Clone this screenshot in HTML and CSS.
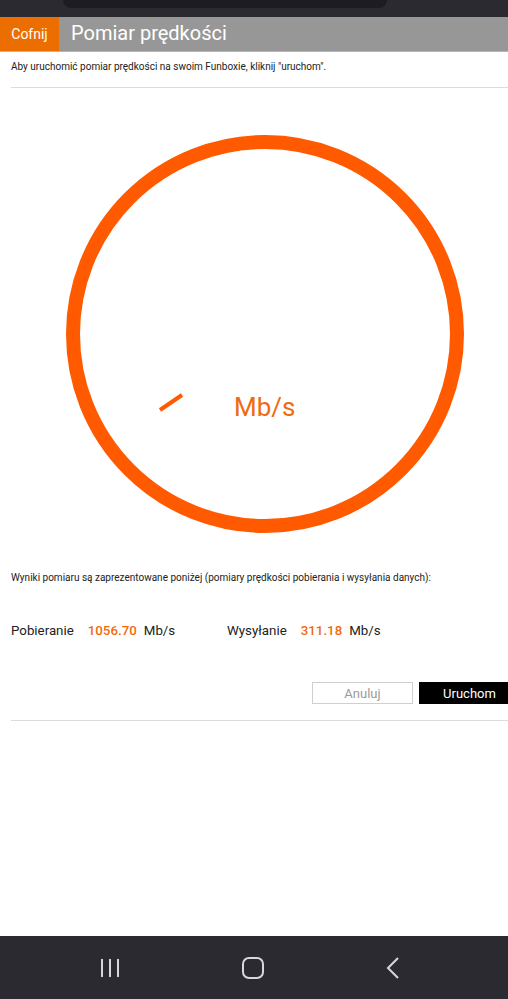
FILE: index.html
```html
<!DOCTYPE html>
<html lang="pl">

<head>
  <meta charset="UTF-8">
  <meta name="viewport" content="width=device-width, initial-scale=1.0">
  <title>Pomiar prędkości</title>
  <link rel="stylesheet" href="styles.css">
</head>

<body>
  <div class="statusbar">
    <div class="notch"></div>
  </div>

  <div class="header">
    <span class="back">Cofnij</span>
    <h1 class="title">Pomiar prędkości</h1>
  </div>

  <div class="main">
    <p class="info">Aby uruchomić pomiar prędkości na swoim Funboxie, kliknij "uruchom".</p>
    <hr class="sep">

    <!-- licznik -->
    <svg class="gauge" width="508" height="400" viewBox="0 0 508 400">
      <circle cx="265" cy="200" r="192" fill="none" stroke="#ff5a00" stroke-width="14" />
      <line x1="160" y1="276" x2="182" y2="261" stroke="#ff5a00" stroke-width="4" />
      <text x="234" y="282" class="gauge-unit">Mb/s</text>
    </svg>

    <p class="info info-results">Wyniki pomiaru są zaprezentowane poniżej (pomiary prędkości pobierania i wysyłania danych):</p>

    <div class="results">
      <div class="result">
        <span class="label">Pobieranie</span>
        <span class="value">1056.70</span>
        <span class="unit">Mb/s</span>
      </div>
      <div class="result">
        <span class="label">Wysyłanie</span>
        <span class="value">311.18</span>
        <span class="unit">Mb/s</span>
      </div>
    </div>

    <div class="buttons">
      <button class="btn btn-cancel">Anuluj</button>
      <button class="btn btn-run">Uruchom</button>
    </div>
    <hr class="sep sep-bottom">
  </div>

  <div class="navbar">
    <svg width="20" height="20" viewBox="0 0 20 20">
      <path d="M2 1v18M10 1v18M18 1v18" stroke="#d8d8da" stroke-width="2" fill="none" />
    </svg>
    <svg width="22" height="22" viewBox="0 0 22 22">
      <rect x="1" y="1" width="20" height="20" rx="6" stroke="#d8d8da" stroke-width="2" fill="none" />
    </svg>
    <svg width="14" height="22" viewBox="0 0 14 22">
      <path d="M12 1L2 11l10 10" stroke="#d8d8da" stroke-width="2" fill="none" />
    </svg>
  </div>
</body>

</html>
```

FILE: styles.css
```css
* {
  margin: 0;
  padding: 0;
  box-sizing: border-box;
}

body {
  width: 508px;
  min-height: 999px;
  display: flex;
  flex-direction: column;
  font-family: Roboto, "Liberation Sans", sans-serif;
  background-color: #fff;
  color: #222;
}

.statusbar {
  height: 17px;
  background-color: #2b2a30;
}

.notch {
  width: 324px;
  height: 8px;
  margin-left: 63px;
  background-color: #1d1c21;
  border-radius: 0 0 10px 10px;
}

.header {
  display: flex;
  height: 35px;
  background-color: #979797;
  border-bottom: 1px solid #b5b5b5;
}

.back {
  width: 59px;
  display: flex;
  align-items: center;
  justify-content: center;
  background-color: #ed6e00;
  color: #fff;
  font-size: 14px;
}

.title {
  padding-left: 12px;
  font-size: 20px;
  font-weight: normal;
  line-height: 33px;
  color: #fff;
}

.main {
  flex: 1;
}

.info {
  padding: 0 11px;
  font-size: 10px;
  line-height: 14px;
  margin-top: 8px;
}

.sep {
  margin: 13px 0 0 11px;
  border: 0;
  border-top: 1px solid #dcdcdc;
}

.gauge {
  display: block;
  margin-top: 46px;
}

.gauge-unit {
  font-size: 26px;
  fill: #f06a10;
  font-family: Roboto, "Liberation Sans", sans-serif;
}

.info-results {
  margin-top: 37px;
}

.results {
  display: flex;
  padding: 0 11px;
  margin-top: 38px;
  font-size: 13.3px;
}

.result {
  width: 216px;
  display: flex;
  gap: 14px;
}

.result .value {
  color: #f06a10;
  font-weight: 500;
  margin-right: -7px;
}

.buttons {
  display: flex;
  justify-content: flex-end;
  gap: 6px;
  margin-top: 44px;
}

.btn {
  height: 22px;
  font-family: Roboto, "Liberation Sans", sans-serif;
  font-size: 13px;
  border: 1px solid #cfcfcf;
}

.btn-cancel {
  width: 101px;
  background-color: #fff;
  color: #9a9a9a;
}

.btn-run {
  width: 89px;
  padding-left: 12px;
  background-color: #000;
  border-color: #000;
  color: #fff;
}

.sep-bottom {
  margin-top: 16px;
}

.navbar {
  height: 63px;
  display: flex;
  align-items: center;
  gap: 122px;
  padding-left: 100px;
  background-color: #2b2a30;
}
```
